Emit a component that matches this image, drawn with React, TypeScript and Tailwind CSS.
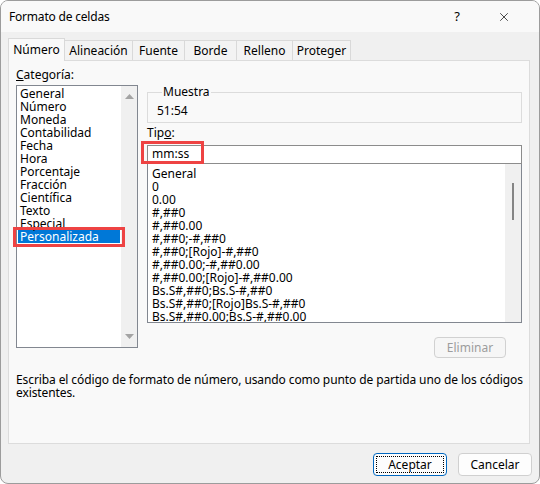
import { X } from "lucide-react";

const categorias = [
  "General",
  "Número",
  "Moneda",
  "Contabilidad",
  "Fecha",
  "Hora",
  "Porcentaje",
  "Fracción",
  "Científica",
  "Texto",
  "Especial",
  "Personalizada",
];

const formatos = [
  "General",
  "0",
  "0.00",
  "#,##0",
  "#,##0.00",
  "#,##0;-#,##0",
  "#,##0;[Rojo]-#,##0",
  "#,##0.00;-#,##0.00",
  "#,##0.00;[Rojo]-#,##0.00",
  "Bs.S#,##0;Bs.S-#,##0",
  "Bs.S#,##0;[Rojo]Bs.S-#,##0",
  "Bs.S#,##0.00;Bs.S-#,##0.00",
];

const tabs = [
  { label: "Alineación", w: "w-[68px]" },
  { label: "Fuente", w: "w-[52px]" },
  { label: "Borde", w: "w-[52px]" },
  { label: "Relleno", w: "w-[56px]" },
  { label: "Proteger", w: "w-[58px]" },
];

function Arrow({ up }: { up?: boolean }) {
  return (
    <svg width="9" height="5" viewBox="0 0 9 5" className="fill-[#a3a3a3]">
      {up ? <polygon points="0,5 9,5 4.5,0" /> : <polygon points="0,0 9,0 4.5,5" />}
    </svg>
  );
}

export default function App() {
  return (
    <div className="flex h-[484px] w-[540px] flex-col overflow-hidden rounded-[8px] border border-[#9c9c9c] bg-[#f0f0f0] font-['Noto_Sans',sans-serif] text-[12px] text-black">
      {/* title bar */}
      <div className="flex h-[31px] items-center bg-[#f9f9f9] pl-[8px]">
        <span className="tracking-[-0.2px]">Formato de celdas</span>
        <div className="ml-auto flex items-center">
          <span className="w-[46px] pr-[2px] text-center text-[13px]">?</span>
          <span className="mr-[12px] flex w-[46px] justify-center">
            <X className="h-[14px] w-[14px]" strokeWidth={1.2} />
          </span>
        </div>
      </div>

      {/* tabs */}
      <div className="relative z-10 -mb-px mt-[6px] flex h-[23px] items-end pl-[7px]">
        <div className="flex h-[23px] w-[57px] items-center justify-center border border-b-0 border-[#d9d9d9] bg-[#f9f9f9] pb-[1px]">
          Número
        </div>
        {tabs.map((t) => (
          <div
            key={t.label}
            className={`mb-px flex h-[20px] items-center justify-center border border-b-0 border-l-0 border-[#d9d9d9] bg-[#f3f3f3] ${t.w}`}
          >
            {t.label}
          </div>
        ))}
      </div>

      {/* panel */}
      <div className="ml-[7px] h-[384px] w-[522px] border border-[#dcdcdc] bg-[#f9f9f9] px-[7px] pt-[6px]">
        <div className="flex gap-[9px]">
          {/* categories */}
          <div className="relative w-[122px]">
            <div className="h-[16px] leading-[16px]">
              <span className="underline">C</span>ategoría:
            </div>
            <div className="mt-[2px] flex h-[263px] border border-[#828790] bg-white">
              <div className="flex-1 overflow-hidden pt-[1px]">
                {categorias.map((c) => (
                  <div
                    key={c}
                    className={
                      c === "Personalizada"
                        ? "mx-[1px] bg-[#0078d7] px-[2px] leading-[13px] text-white"
                        : "mx-[1px] px-[2px] leading-[13px]"
                    }
                  >
                    {c}
                  </div>
                ))}
              </div>
              <div className="flex w-[16px] flex-col items-center justify-between bg-[#f0f0f0] py-[8px]">
                <Arrow up />
                <Arrow />
              </div>
            </div>
            <div className="absolute left-[-3px] top-[160px] h-[20px] w-[112px] border-[3px] border-[#ee4343]" />
          </div>

          {/* right column */}
          <div className="flex w-[375px] flex-col items-stretch">
            <fieldset className="mt-[18px] border border-[#dcdcdc] pb-[3px] pl-[9px] pt-[4px]">
              <legend className="ml-[5px] px-[1px] leading-[14px]">Muestra</legend>
              <div className="leading-[16px]">51:54</div>
            </fieldset>
            <div className="mt-[2px] h-[16px] leading-[16px]">
              Tip<span className="underline">o</span>:
            </div>
            <div className="relative mt-[4px]">
              <div className="flex h-[19px] items-center border border-[#8c8c8c] bg-white pl-[4px] pb-[1px]">
                mm:ss
              </div>
              <div className="absolute left-[-6px] top-[-4px] h-[23px] w-[63px] border-[3px] border-[#ee4343]" />
            </div>
            <div className="flex h-[159px] border border-t-0 border-[#828790] bg-white">
              <div className="flex-1 overflow-hidden pl-[4px] pt-[3px]">
                {formatos.map((f) => (
                  <div key={f} className="whitespace-nowrap leading-[13px]">
                    {f}
                  </div>
                ))}
              </div>
              <div className="flex w-[16px] justify-center bg-[#f0f0f0] pt-[19px]">
                <div className="h-[37px] w-[2px] bg-[#858585]" />
              </div>
            </div>
            <button className="mr-[16px] mt-[14px] h-[21px] w-[72px] self-end rounded-[4px] border border-[#d1d1d1] bg-[#f6f6f6] text-[#9d9d9d]">
              Eliminar
            </button>
          </div>
        </div>

        <p className="mt-[15px] whitespace-nowrap leading-[13px] tracking-[-0.1px]">
          Escriba el código de formato de número, usando como punto de partida uno de los códigos
          <br />
          existentes.
        </p>
      </div>

      {/* footer */}
      <div className="flex justify-end gap-[11px] pr-[7px] pt-[9px]">
        <button className="flex h-[23px] w-[74px] items-center justify-center rounded-[4px] border border-[#0067c0] bg-[#fdfdfd] p-[2px]">
          <span className="flex h-full w-full items-center justify-center border border-dotted border-black">
            Aceptar
          </span>
        </button>
        <button className="h-[23px] w-[74px] rounded-[4px] border border-[#d0d0d0] bg-[#fdfdfd]">
          Cancelar
        </button>
      </div>
    </div>
  );
}
